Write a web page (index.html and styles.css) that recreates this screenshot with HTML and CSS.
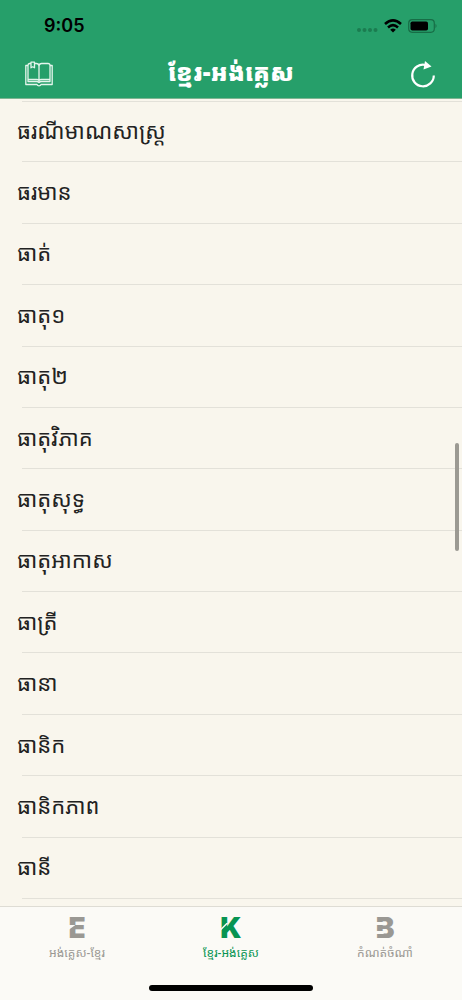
FILE: index.html
```
<!DOCTYPE html>
<html lang="km">
	<head>
		<meta charset="UTF-8">
		<meta name="viewport" content="width=device-width, initial-scale=1">
		<title>ខ្មែរ-អង់គ្លេស</title>
		<link rel="stylesheet" href="styles.css">
	</head>
	<body>
		<div class="app">
			<header class="top">
				<div class="status">
					<span class="time">9:05</span>
					<div class="signals">
						<svg width="22" height="6" viewBox="0 0 22 6" fill="#1b7c50">
							<circle cx="3" cy="3" r="2"/>
							<circle cx="8.500" cy="3" r="2"/>
							<circle cx="14" cy="3" r="2"/>
							<circle cx="19.500" cy="3" r="2"/>
						</svg>
						<svg class="wifi" width="18" height="14" viewBox="0 0 18 14" fill="none" stroke="#000" stroke-width="2.600">
							<path d="M1 5Q9 -2.200 17 5"/>
							<path d="M4 8.400Q9 4 14 8.400"/>
							<path d="M6.200 10.700Q9 8.400 11.800 10.700L9 13.500z" fill="#000" stroke="none"/>
						</svg>
						<svg class="battery" width="30" height="14" viewBox="0 0 30 14">
							<rect x="0.700" y="0.700" width="25.600" height="12.600" rx="3.500" fill="none" stroke="#176d46" stroke-width="1.200"/>
							<rect x="2.500" y="2.500" width="17.500" height="9" rx="1.800"/>
							<path d="M27.500 4.800q2 2.200 0 4.400z" fill="#176d46"/>
						</svg>
					</div>
				</div>
				<div class="navbar">
					<button class="icon" type="button" aria-label="សៀវភៅ">
						<svg width="28" height="26" viewBox="0 0 28 26" fill="none" stroke="#e4f5ec" stroke-width="1.300" stroke-linejoin="round">
							<path d="M6 2.500H4.500Q3 2.700 3 4.500V20.500H11.500Q13 20.500 14 21.500Q15 20.500 16.500 20.500H25V4.500Q25 2.500 23 2.500H16.500Q14.500 2.500 14 4.500Q13.500 2.500 11.500 2.500H9.500"/>
							<path d="M14 4.500V21.500M3 18.500H11.500Q13.500 18.500 14 19.500Q14.500 18.500 16.500 18.500H25"/>
							<path d="M3 4.500H0.800V23.500H12Q12.500 24.800 14 24.800T16 23.500H27.200V4.500H25"/>
							<path d="M6 1.200H9.500V6.800L7.700 5.800L6 6.800z"/>
						</svg>
					</button>
					<h1>ខ្មែរ-អង់គ្លេស</h1>
					<button class="icon" type="button" aria-label="ផ្ទុកឡើងវិញ">
						<svg width="26" height="28" viewBox="0 0 26 28" fill="none" stroke="#fff" stroke-width="2.200">
							<path d="M23.800 15.500A10.800 10.800 0 1 1 15.500 5"/>
							<path d="M15 1L21.500 6.500L13.500 9.500z" fill="#fff" stroke="none"/>
						</svg>
					</button>
				</div>
			</header>

			<main class="words">
				<ul>
					<li><a href="#">ធរណីមាណសាស្ត្រ</a></li>
					<li><a href="#">ធរមាន</a></li>
					<li><a href="#">ធាត់</a></li>
					<li><a href="#">ធាតុ១</a></li>
					<li><a href="#">ធាតុ២</a></li>
					<li><a href="#">ធាតុវិភាគ</a></li>
					<li><a href="#">ធាតុសុទ្ធ</a></li>
					<li><a href="#">ធាតុអាកាស</a></li>
					<li><a href="#">ធាត្រី</a></li>
					<li><a href="#">ធានា</a></li>
					<li><a href="#">ធានិក</a></li>
					<li><a href="#">ធានិកភាព</a></li>
					<li><a href="#">ធានី</a></li>
				</ul>
				<div class="thumb"></div>
			</main>

			<footer>
				<nav class="tabs">
					<a href="#">
						<span class="letter letter-e">E</span>
						<span class="label">អង់គ្លេស-ខ្មែរ</span>
					</a>
					<a class="active" href="#">
						<span class="letter letter-k">K</span>
						<span class="label">ខ្មែរ-អង់គ្លេស</span>
					</a>
					<a href="#">
						<span class="letter letter-b">B</span>
						<span class="label">កំណត់ចំណាំ</span>
					</a>
				</nav>
				<div class="home"></div>
			</footer>
		</div>
	</body>
</html>
```
FILE: styles.css
```
*{
	box-sizing: border-box;
}
body{
	margin: 0;
	background: #f9f6ed;
	color: #222;
	font-family: "Khmer OS Battambang", "Noto Sans Khmer", "Noto Sans", sans-serif;
}
.app{
	min-height: 100vh;
	display: flex;
	flex-direction: column;
}

/* header */
.top{
	background: #269f6a;
	border-bottom: 1px solid #7fb592;
}
.status{
	height: 50px;
	padding: 2px 24px 0 44px;
	display: flex;
	align-items: center;
	justify-content: space-between;
}
.time{
	color: #000;
	font: 600 18px/24px Inter, sans-serif;
}
.signals{
	display: flex;
	align-items: center;
	gap: 6px;
}
.signals svg:first-child{
	margin-top: 8px;
}
.navbar{
	height: 48px;
	padding: 0 24px;
	display: flex;
	align-items: center;
	justify-content: space-between;
}
.icon{
	width: 30px;
	height: 30px;
	padding: 0;
	border: 0;
	background: none;
	display: flex;
	align-items: center;
	justify-content: center;
}
h1{
	margin: 0;
	padding-bottom: 4px;
	color: #fff;
	font-size: 24px;
	line-height: 40px;
	font-weight: 900;
}

/* word list */
.words{
	flex: 1;
	position: relative;
	display: flex;
	padding: 2px 0 7px;
}
ul{
	flex: 1;
	margin: 0;
	padding: 0;
	list-style: none;
	display: grid;
	grid-auto-rows: 1fr;
}
li{
	position: relative;
	display: flex;
	align-items: center;
	padding: 0 0 4px 17px;
}
li::after{
	content: "";
	position: absolute;
	left: 22px;
	right: 0;
	bottom: 0;
	border-bottom: 1px solid #e3e1d9;
}
li:first-child{
	background: linear-gradient(#e3e1d9, #e3e1d9) 22px 0 / 100% 1px no-repeat;
}
li a{
	flex: 1;
	color: #222;
	font-size: 22px;
	line-height: 44px;
	text-decoration: none;
}
.thumb{
	position: absolute;
	bottom: 44%;
	right: 3px;
	width: 4px;
	height: 108px;
	border-radius: 2px;
	background: #9c9a93;
}

/* bottom tabs */
footer{
	background: #fbfaf6;
	border-top: 1px solid #dedcd4;
}
.tabs{
	display: grid;
	grid-template-columns: 1fr 1fr 1fr;
	padding-top: 10px;
}
.tabs a{
	display: flex;
	flex-direction: column;
	align-items: center;
	color: #9a9893;
	text-decoration: none;
}
.tabs .active{
	color: #079452;
}
.letter{
	position: relative;
	font: 900 28px/22px Inter, sans-serif;
}
/* cuts in the tab letters */
.letter::after{
	content: "";
	position: absolute;
	background: #fbfaf6;
}
.letter-e::after{
	left: 0;
	top: 8px;
	width: 7px;
	height: 5px;
	clip-path: polygon(0 0, 100% 0, 0 100%);
}
.letter-k::after{
	left: 0;
	top: 6px;
	width: 8px;
	height: 8px;
	clip-path: polygon(0 75%, 75% 0, 100% 0, 0 100%);
}
.letter-b::after{
	left: 0;
	top: 5px;
	width: 8px;
	height: 12px;
	clip-path: polygon(0 0, 100% 0, 100% 25%, 0 25%, 0 75%, 100% 75%, 100% 100%, 0 100%);
}
.label{
	font-size: 12px;
	line-height: 28px;
}
.home{
	width: 164px;
	height: 6px;
	margin: 18px auto 9px;
	border-radius: 3px;
	background: #000;
}
```
